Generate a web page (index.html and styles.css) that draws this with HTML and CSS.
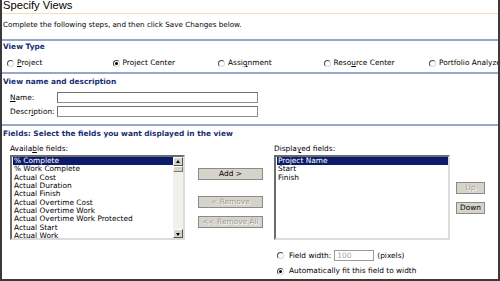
FILE: index.html
```html
<!DOCTYPE html>
<html lang="en">
<head>
    <meta charset="UTF-8">
    <title>Specify Views</title>
    <link rel="stylesheet" href="styles.css">
</head>
<body>
<div class="frame">
    <h1 class="title">Specify Views</h1>
    <p class="intro">Complete the following steps, and then click Save Changes below.</p>

    <div class="section">
        <div class="section-head">View Type</div>
        <div class="radio-row">
            <label class="opt"><span class="radio"></span><u>P</u>roject</label>
            <label class="opt"><span class="radio checked"></span>Project Center</label>
            <label class="opt"><span class="radio"></span>Assi<u>g</u>nment</label>
            <label class="opt"><span class="radio"></span>Reso<u>u</u>rce Center</label>
            <label class="opt last"><span class="radio"></span>Portfolio Analyze</label>
        </div>
    </div>

    <div class="section">
        <div class="section-head pad">View name and description</div>
        <div class="form-row first">
            <label class="lbl" for="name"><u>N</u>ame:</label>
            <input class="txt" type="text" id="name">
        </div>
        <div class="form-row">
            <label class="lbl" for="desc">Descr<u>i</u>ption:</label>
            <input class="txt" type="text" id="desc">
        </div>
    </div>

    <div class="section">
        <div class="section-head pad">Fields: Select the fields you want displayed in the view</div>
        <div class="fields">
            <div class="col">
                <div class="col-label">Availa<u>b</u>le fields:</div>
                <div class="list avail">
                    <div class="items">
                        <div class="item sel">% Complete</div>
                        <div class="item">% Work Complete</div>
                        <div class="item">Actual Cost</div>
                        <div class="item">Actual Duration</div>
                        <div class="item">Actual Finish</div>
                        <div class="item">Actual Overtime Cost</div>
                        <div class="item">Actual Overtime Work</div>
                        <div class="item">Actual Overtime Work Protected</div>
                        <div class="item">Actual Start</div>
                        <div class="item">Actual Work</div>
                    </div>
                    <div class="scrollbar">
                        <div class="arrow up"></div>
                        <div class="thumb"></div>
                        <div class="track"></div>
                        <div class="arrow down"></div>
                    </div>
                </div>
            </div>

            <div class="move-buttons">
                <button class="btn add">Add &gt;</button>
                <button class="btn off remove">&lt; Remove</button>
                <button class="btn off">&lt;&lt; Remove All</button>
            </div>

            <div class="col">
                <div class="col-label">Displa<u>y</u>ed fields:</div>
                <div class="list shown">
                    <div class="items">
                        <div class="item sel">Project Name</div>
                        <div class="item">Start</div>
                        <div class="item">Finish</div>
                    </div>
                </div>
                <div class="width-opts">
                    <label class="opt-line"><span class="radio"></span>Field width: <input class="txt small" type="text" value="100" disabled> (pixels)</label>
                    <label class="opt-line"><span class="radio checked"></span>Automatically fit this field to width</label>
                </div>
            </div>

            <div class="order-buttons">
                <button class="btn off small-btn">Up</button>
                <button class="btn small-btn down">Down</button>
            </div>
        </div>
    </div>
</div>
</body>
</html>
```

FILE: styles.css
```css
body {
    margin: 0;
    font-family: "DejaVu Sans", Verdana, sans-serif;
    font-size: 7.4px;
    color: #000;
    background: #fff;
}
u {
    text-decoration: underline;
    text-underline-offset: 1px;
}
.frame {
    width: 500px;
    height: 281px;
    box-sizing: border-box;
    border: 2px solid #3a3a3a;
    border-top: none;
    overflow: hidden;
}
.title {
    margin: 0;
    padding-left: 1px;
    height: 13px;
    line-height: 11px;
    font-family: "Liberation Sans", Arial, sans-serif;
    font-size: 11.2px;
    font-weight: normal;
    border-bottom: 1px solid #efe0ad;
}
.intro {
    margin: 0;
    height: 19px;
    padding: 6px 0 0 1px;
    line-height: 10px;
    font-size: 7.2px;
}
.section {
    border-top: 2px solid #9aa6c8;
}
.section-head {
    padding: 1px 0 0 1px;
    line-height: 9px;
    font-weight: bold;
    color: #172c72;
}
.section-head.pad {
    padding-top: 3px;
}
.radio-row {
    display: flex;
    height: 18px;
    padding: 3px 0 0 5px;
    line-height: 10px;
    overflow: hidden;
}
.opt {
    display: flex;
    align-items: center;
    width: 105.5px;
    flex: none;
    white-space: nowrap;
}
.opt.last {
    width: 60px;
}
.radio {
    display: inline-block;
    flex: none;
    width: 5px;
    height: 5px;
    margin-right: 3px;
    border: 1px solid;
    border-color: #4a4a4a #d8d8d8 #d8d8d8 #4a4a4a;
    border-radius: 50%;
    position: relative;
}
.radio.checked::after {
    content: "";
    position: absolute;
    left: 1px;
    top: 1px;
    width: 3px;
    height: 3px;
    border-radius: 50%;
    background: #000;
}
.form-row {
    display: flex;
    align-items: center;
    height: 11px;
    margin-top: 3px;
    padding-left: 8px;
}
.form-row.first {
    margin-top: 6px;
}
.form-row:last-child {
    margin-bottom: 7px;
}
.lbl {
    width: 47px;
    flex: none;
}
.txt {
    box-sizing: border-box;
    width: 201px;
    height: 11px;
    margin: 0;
    padding: 0 2px;
    border: 1px solid #8c8c8c;
    border-top-color: #6f6f6f;
    border-left-color: #6f6f6f;
    font: inherit;
    background: #fff;
}
.fields {
    display: flex;
    padding-left: 8px;
}
.col {
    display: flex;
    flex-direction: column;
}
.col-label {
    margin-top: 6px;
    height: 9px;
    line-height: 9px;
    margin-bottom: 2px;
}
.list {
    display: flex;
    box-sizing: border-box;
    height: 85px;
    border: 2px solid;
    border-color: #6c6c6c #dcdcdc #dcdcdc #6c6c6c;
    background: #fff;
    overflow: hidden;
}
.list.avail {
    width: 175px;
}
.list.shown {
    width: 176px;
}
.items {
    flex: 1;
    padding-left: 1px;
}
.item {
    height: 8.33px;
    line-height: 8.33px;
    padding-left: 1px;
    white-space: nowrap;
}
.item.sel {
    background: #0c1c6c;
    color: #fff;
}
.scrollbar {
    display: flex;
    flex-direction: column;
    width: 10px;
    flex: none;
    background: #ecebe6;
}
.arrow {
    box-sizing: border-box;
    height: 9px;
    background: #d6d3cb;
    border: 1px solid;
    border-color: #fff #555 #555 #fff;
    position: relative;
}
.arrow::after {
    content: "";
    position: absolute;
    left: 1.5px;
    border-left: 2.5px solid transparent;
    border-right: 2.5px solid transparent;
}
.arrow.up::after {
    top: 2px;
    border-bottom: 3px solid #000;
}
.arrow.down::after {
    top: 3px;
    border-top: 3px solid #000;
}
.thumb {
    height: 6px;
    box-sizing: border-box;
    background: #d6d3cb;
    border: 1px solid;
    border-color: #fff #777 #777 #fff;
}
.track {
    flex: 1;
    background: #f1f0ec;
}
.move-buttons {
    display: flex;
    flex-direction: column;
    width: 65px;
    margin: 0 11px 0 13px;
    padding-top: 30px;
}
.btn {
    box-sizing: border-box;
    height: 12px;
    margin: 0;
    padding: 0;
    border: 1px solid;
    border-color: #f4f3ef #4e4e4e #4e4e4e #f4f3ef;
    outline: 1px solid #8a8a8a;
    outline-offset: -1px;
    background: #d6d3cb;
    font: inherit;
    line-height: 10px;
    color: #000;
}
.btn.off {
    color: #a19e96;
    text-shadow: 1px 1px 0 #fff;
}
.move-buttons .remove {
    margin-top: 16px;
}
.move-buttons .btn + .btn + .btn {
    margin-top: 8px;
}
.width-opts {
    padding-left: 3px;
}
.opt-line {
    display: flex;
    align-items: center;
    white-space: nowrap;
    line-height: 10px;
}
.opt-line:first-child {
    margin-top: 10px;
    height: 11px;
}
.opt-line + .opt-line {
    margin-top: 5px;
}
.opt-line .radio {
    margin-right: 5px;
}
.txt.small {
    width: 40px;
    margin: 0 3px;
    color: #a4a4a4;
    border-color: #9a9a9a;
}
.order-buttons {
    display: flex;
    flex-direction: column;
    margin-left: 6px;
    padding-top: 44px;
}
.small-btn {
    width: 29px;
}
.order-buttons .down {
    margin-top: 8px;
}
```
